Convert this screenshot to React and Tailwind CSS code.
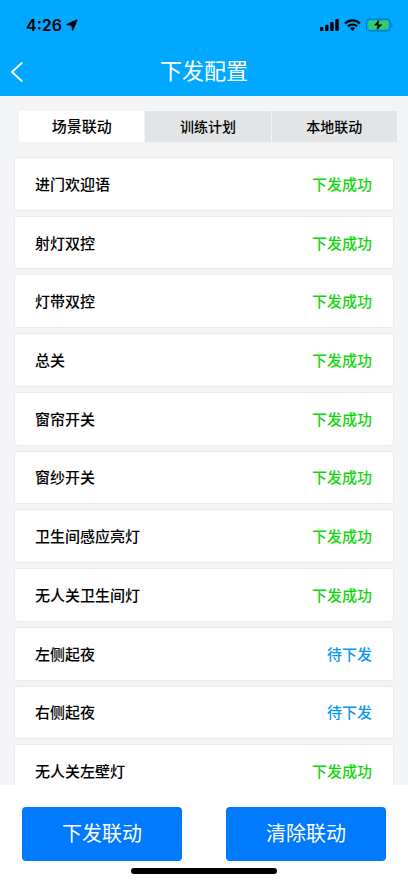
import { useState } from 'react'

const tabs = ['场景联动', '训练计划', '本地联动']

const scenes = [
  { name: '进门欢迎语', sent: true },
  { name: '射灯双控', sent: true },
  { name: '灯带双控', sent: true },
  { name: '总关', sent: true },
  { name: '窗帘开关', sent: true },
  { name: '窗纱开关', sent: true },
  { name: '卫生间感应亮灯', sent: true },
  { name: '无人关卫生间灯', sent: true },
  { name: '左侧起夜', sent: false },
  { name: '右侧起夜', sent: false },
  { name: '无人关左壁灯', sent: true },
]

function SignalIcon(){
  return (
    <svg width="19" height="12" viewBox="0 0 19 12" fill="currentColor" aria-hidden="true">
      <rect x="0" y="8" width="3.4" height="4" rx="0.9" />
      <rect x="5.1" y="5.8" width="3.4" height="6.2" rx="0.9" />
      <rect x="10.2" y="3" width="3.4" height="9" rx="0.9" />
      <rect x="15.3" y="0" width="3.4" height="12" rx="0.9" />
    </svg>
  )
}

function WifiIcon(){
  return (
    <svg width="17" height="12" viewBox="0 0 17 12" fill="none" stroke="currentColor" strokeWidth="2.2" aria-hidden="true">
      <path d="M1 4.5a10.6 10.6 0 0 1 15 0" />
      <path d="M3.9 7.4a6.5 6.5 0 0 1 9.2 0" />
      <path d="M8.5 12 5.900 9.300a3.700 3.700 0 0 1 5.200 0Z" fill="currentColor" stroke="none" />
    </svg>
  )
}

function BatteryIcon(){
  return (
    <svg width="27" height="14" viewBox="0 0 27 14" aria-hidden="true">
      <rect x="0.6" y="1.1" width="23.4" height="11.8" rx="3.4" fill="none" stroke="#0878b4" strokeWidth="1.1" />
      <path d="M25.2 5v4c.8-.3 1.3-1.1 1.3-2s-.5-1.7-1.3-2Z" fill="#0878b4" />
      <rect x="2.2" y="2.7" width="20.2" height="8.6" rx="2" fill="#34d065" />
      <path d="M13.4 1 7.6 7.6h3.6L10.4 13l6.3-6.7h-3.9L13.4 1Z" fill="#000" stroke="#2fc068" strokeWidth="0.5" />
    </svg>
  )
}

function StatusBar(){
  return (
    <div className="flex h-[50px] items-center justify-between pr-[15px] pl-[26px] text-black">
      <div className="flex items-center gap-1">
        <span className="font-['Inter',sans-serif] text-[16px] leading-5 font-semibold">4:26</span>
        <svg width="12" height="12" viewBox="0 0 12 12" fill="currentColor" stroke="currentColor" strokeWidth="1.2" strokeLinejoin="round" aria-hidden="true">
          <path d="M11 1 .8 5.6l5.200.5.5 5.100L11 1Z" />
        </svg>
      </div>
      <div className="flex items-center gap-[5px]">
        <SignalIcon />
        <WifiIcon />
        <BatteryIcon />
      </div>
    </div>
  )
}

function SceneRow({ scene }){
  return (
    <li className="flex items-center justify-between rounded border border-[#e9eaed] bg-white pt-0.5 pr-[21px] pl-5 text-[15px] leading-5 font-medium">
      <span>{scene.name}</span>
      {scene.sent
        ? <span className="text-[#12d60c]">下发成功</span>
        : <span className="text-[#0a98ee]">待下发</span>}
    </li>
  )
}

function App(){
  const [active, setActive] = useState(0)

  return (
    <div className="flex h-screen flex-col bg-[#f3f4f6] font-['Liberation_Sans','Noto_Sans_CJK_SC',sans-serif] text-black">
      <header className="shrink-0 bg-[#00a9ff]">
        <StatusBar />
        <div className="grid h-[46px] grid-cols-[40px_1fr_40px] items-center pb-0.5 text-white">
          <button type="button" aria-label="返回" className="flex h-full items-center pl-[10px]">
            <svg width="14" height="22" viewBox="0 0 14 22" fill="none" stroke="currentColor" strokeWidth="1.8" aria-hidden="true">
              <path d="M12.3 1.5 2 11l10.3 9.500" />
            </svg>
          </button>
          <h1 className="text-center text-[22px] leading-7">下发配置</h1>
        </div>
      </header>

      <main className="min-h-0 flex-1 overflow-hidden">
        <div role="tablist" className="mt-[15px] mr-[11px] ml-[19px] grid grid-cols-3 gap-px">
          {tabs.map((tab, i)=> (
            <button
              key={tab}
              type="button"
              role="tab"
              aria-selected={i===active}
              onClick={()=> setActive(i)}
              className={`h-[31px] leading-5 font-medium ${i===active ? 'bg-white text-[15px]' : 'bg-[#e3e4e6] text-[14px]'}`}
            >
              {tab}
            </button>
          ))}
        </div>
        <ul className="mx-[14px] mt-[15px] grid min-h-[641px] auto-rows-fr gap-[5px]">
          {scenes.map(scene=> (
            <SceneRow key={scene.name} scene={scene} />
          ))}
        </ul>
      </main>

      <footer className="shrink-0 bg-white px-[22px] pt-[22px] pb-[9px]">
        <div className="grid grid-cols-2 gap-11">
          <button type="button" className="h-[54px] rounded bg-[#007aff] text-[20px] leading-7 text-white">下发联动</button>
          <button type="button" className="h-[54px] rounded bg-[#007aff] text-[20px] leading-7 text-white">清除联动</button>
        </div>
        <div className="mx-auto mt-[7px] h-[6px] w-[146px] rounded-full bg-black" />
      </footer>
    </div>
  )
}

export default App
